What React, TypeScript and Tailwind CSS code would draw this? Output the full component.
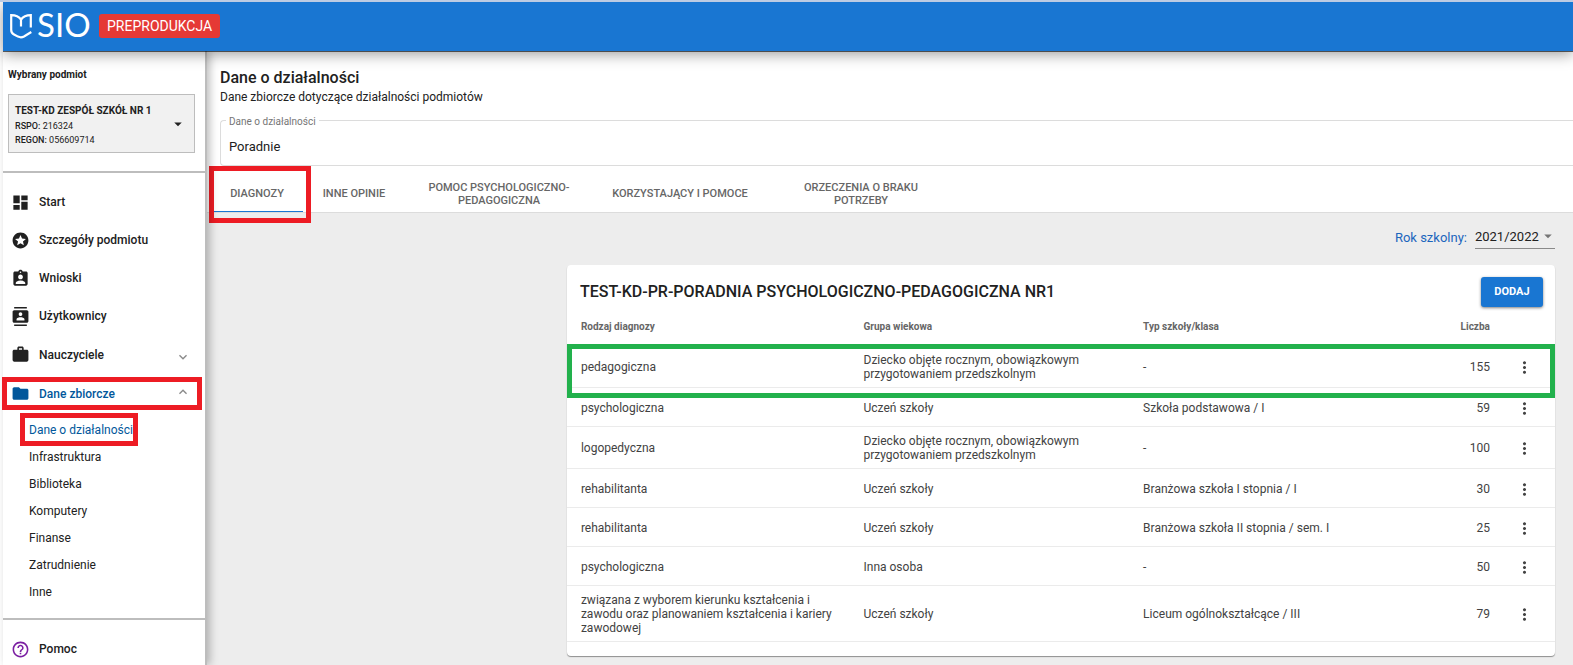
import React from "react";
import type { IconType } from "react-icons";
import {
  MdArrowDropDown,
  MdAssignmentInd,
  MdContacts,
  MdDashboard,
  MdFolder,
  MdHelpOutline,
  MdKeyboardArrowDown,
  MdKeyboardArrowUp,
  MdMoreVert,
  MdStars,
  MdWork,
} from "react-icons/md";

type NavItem = { label: string; icon: IconType };

const navItems: NavItem[] = [
  { label: "Start", icon: MdDashboard },
  { label: "Szczegóły podmiotu", icon: MdStars },
  { label: "Wnioski", icon: MdAssignmentInd },
  { label: "Użytkownicy", icon: MdContacts },
];

const subItems = ["Infrastruktura", "Biblioteka", "Komputery", "Finanse", "Zatrudnienie", "Inne"];

type Row = { kind: string; group: string; school: string; count: number };

const rows: Row[] = [
  { kind: "pedagogiczna", group: "Dziecko objęte rocznym, obowiązkowym przygotowaniem przedszkolnym", school: "-", count: 155 },
  { kind: "psychologiczna", group: "Uczeń szkoły", school: "Szkoła podstawowa / I", count: 59 },
  { kind: "logopedyczna", group: "Dziecko objęte rocznym, obowiązkowym przygotowaniem przedszkolnym", school: "-", count: 100 },
  { kind: "rehabilitanta", group: "Uczeń szkoły", school: "Branżowa szkoła I stopnia / I", count: 30 },
  { kind: "rehabilitanta", group: "Uczeń szkoły", school: "Branżowa szkoła II stopnia / sem. I", count: 25 },
  { kind: "psychologiczna", group: "Inna osoba", school: "-", count: 50 },
  { kind: "związana z wyborem kierunku kształcenia i zawodu oraz planowaniem kształcenia i kariery zawodowej", group: "Uczeń szkoły", school: "Liceum ogólnokształcące / III", count: 79 },
];

function Logo() {
  return (
    <div className="flex w-[82px] items-center gap-1 text-white">
      <svg viewBox="0 0 24 26" className="h-[26px] w-6 shrink-0" fill="none" stroke="currentColor" strokeWidth="2.2" aria-hidden="true">
        <path d="M12 13.500 V6.500 Q9 2.200 2.200 2.200 V17 Q2.200 20 5 21.500 L9 23.600 Q12 25 15 23.500 L22.300 19" />
        <path d="M12 6.500 Q15 2.200 21.800 2.200 V14.500" />
      </svg>
      <span className="pb-[3px] font-[Lato,sans-serif] text-[33px] leading-9">SIO</span>
    </div>
  );
}

function Header() {
  return (
    <header className="relative z-20 ml-[3px] flex h-[49px] items-center bg-[#1976d2] pb-[2px] pl-[6px] shadow-[0_1px_0_rgba(0,0,0,0.6),0_3px_14px_rgba(0,0,0,0.4)]">
      <Logo />
      <span className="ml-2 rounded-[3px] bg-[#e53935] px-2 text-sm leading-6 text-white">PREPRODUKCJA</span>
    </header>
  );
}

function Sidebar() {
  return (
    <aside className="relative z-10 ml-[3px] w-[204px] shrink-0 border-r-2 border-[#bdbdbd] bg-white shadow-[3px_0_8px_rgba(0,0,0,0.25)]">
      <div className="h-[120px] px-[5px] pt-4">
        <p className="text-[10px] leading-4 font-bold">Wybrany podmiot</p>
        <button type="button" className="mt-[11px] flex h-[59px] w-[187px] items-center justify-between border border-[#bdbdbd] bg-[#f1f1f1] pr-[7px] pl-[6px] text-left">
          <span className="pt-[2px] text-[9px] leading-[14px]">
            <span className="block text-[10px] leading-4 font-bold">TEST-KD ZESPÓŁ SZKÓŁ NR 1</span>
            <span className="block"><b className="font-medium">RSPO:</b> 216324</span>
            <span className="block"><b className="font-medium">REGON:</b> 056609714</span>
          </span>
          <MdArrowDropDown size={18} />
        </button>
      </div>
      <nav className="border-y-2 border-[#bdbdbd] pt-[10px] pb-[13px]">
        {navItems.map(({ label, icon: Icon }) => (
          <a key={label} href="#" className="flex h-[38px] items-center gap-[9px] pl-2 text-[12px] font-medium">
            <Icon size={19} />
            {label}
          </a>
        ))}
        <a href="#" className="flex h-[39px] items-center gap-[9px] pr-[14px] pl-2 text-[12px] font-medium">
          <MdWork size={19} />
          <span className="grow">Nauczyciele</span>
          <MdKeyboardArrowDown size={16} className="mt-1 text-[#8a8a8a]" />
        </a>
        <a href="#" className="relative flex h-[39px] items-center gap-[9px] pr-[14px] pl-2 text-[12px] font-medium text-[#01579b]">
          <MdFolder size={19} />
          <span className="grow">Dane zbiorcze</span>
          <MdKeyboardArrowUp size={16} className="mb-1 text-[#8a8a8a]" />
          <span className="absolute inset-y-[3px] -left-px w-[200px] border-[5px] border-[#ed1c24]" />
        </a>
        <a href="#" className="relative mt-[3px] flex h-[27px] items-center pl-[26px] text-[12px] text-[#01579b]">
          Dane o działalności
          <span className="absolute -inset-y-[3px] left-[17px] w-[118px] border-[5px] border-[#ed1c24]" />
        </a>
        {subItems.map((label) => (
          <a key={label} href="#" className="flex h-[27px] items-center pl-[26px] text-[12px]">
            {label}
          </a>
        ))}
      </nav>
      <a href="#" className="mt-[10px] flex h-[34px] items-center gap-[9px] pt-1 pl-2 text-[12px] font-medium">
        <MdHelpOutline size={19} className="text-[#7b1fa2]" />
        Pomoc
      </a>
    </aside>
  );
}

function Tabs() {
  const tab = "flex items-center justify-center px-4 pt-[2px] text-center text-[11px] leading-[13px] font-medium text-[#666]";
  return (
    <div role="tablist" className="flex h-[47px] border-b border-[#dcdcdc] pt-[7px] pl-1">
      <button type="button" role="tab" aria-selected="true" className={`${tab} relative w-[92px] border-b border-[#1976d2]`}>
        DIAGNOZY
        <span className="absolute -top-[7px] -bottom-[12px] -left-[2px] w-[102px] border-[5px] border-[#ed1c24]" />
      </button>
      <button type="button" role="tab" className={`${tab} w-[102px]`}>INNE OPINIE</button>
      <button type="button" role="tab" className={`${tab} w-[188px]`}>POMOC PSYCHOLOGICZNO-PEDAGOGICZNA</button>
      <button type="button" role="tab" className={`${tab} w-[174px]`}>KORZYSTAJĄCY I POMOCE</button>
      <button type="button" role="tab" className={`${tab} w-[188px]`}>ORZECZENIA O BRAKU POTRZEBY</button>
    </div>
  );
}

function DataCard() {
  return (
    <section className="ml-auto w-[73.3%] rounded-[4px] bg-white pb-[14px] shadow-[0_1px_1px_rgba(0,0,0,0.4)]">
      <div className="flex items-start justify-between pt-3 pr-3 pl-[13px]">
        <h2 className="text-base leading-[30px] font-medium">TEST-KD-PR-PORADNIA PSYCHOLOGICZNO-PEDAGOGICZNA NR1</h2>
        <button type="button" className="h-[30px] w-[62px] rounded-[3px] bg-[#1976d2] text-[11px] font-bold text-white shadow-[0_1px_3px_rgba(0,0,0,0.5)]">
          DODAJ
        </button>
      </div>
      <table className="w-full table-fixed border-collapse text-left text-[12px] leading-[14px] text-[#424242]">
        <thead>
          <tr className="h-[39px] text-[10px] text-[#666]">
            <th className="w-[28.4%] pr-3 pl-[14px] font-bold">Rodzaj diagnozy</th>
            <th className="w-[28.3%] pr-3 pl-4 font-bold">Grupa wiekowa</th>
            <th className="px-4 font-bold">Typ szkoły/klasa</th>
            <th className="w-[90px] pr-1 text-right font-bold">Liczba</th>
            <th className="w-[61px]" aria-label="Akcje" />
          </tr>
        </thead>
        <tbody>
          {rows.map((row, i) => (
            <tr key={i} className="relative h-[39px] border-b border-[#ebebeb]">
              <td className="pt-[7px] pr-3 pb-[6px] pl-[14px]">
                {row.kind}
                {i === 0 && <span className="absolute inset-x-0 -top-[2px] -bottom-[11px] border-[5px] border-[#22b14c]" />}
              </td>
              <td className="pt-[7px] pr-3 pb-[6px] pl-4">{row.group}</td>
              <td className="px-4 pt-[7px] pb-[6px]">{row.school}</td>
              <td className="pt-[7px] pr-1 pb-[6px] text-right">{row.count}</td>
              <td>
                <button type="button" aria-label="Więcej" className="mx-auto block pt-[2px]">
                  <MdMoreVert size={19} />
                </button>
              </td>
            </tr>
          ))}
        </tbody>
      </table>
    </section>
  );
}

export default function App() {
  return (
    <div className="flex min-h-screen flex-col overflow-hidden border-t-2 border-[#bccbe3] bg-white font-[Roboto,sans-serif] text-[#212121]">
      <Header />
      <div className="flex grow">
        <Sidebar />
        <main className="flex min-w-0 grow flex-col bg-[#ededed]">
          <div className="bg-white">
            <div className="pt-[17px] pl-[13px]">
              <h1 className="text-base leading-5 font-medium">Dane o działalności</h1>
              <p className="text-[12px] leading-[18px]">Dane zbiorcze dotyczące działalności podmiotów</p>
              <fieldset className="mt-2 h-[52px] rounded-l-[4px] border border-r-0 border-[#dcdcdc] pl-[5px]">
                <legend className="px-[3px] pt-1 text-[10px] leading-[8px] text-[#757575]">
                  <label htmlFor="area">Dane o działalności</label>
                </legend>
                <select id="area" className="block w-full appearance-none pt-[11px] pl-[3px] text-[13px] leading-5 outline-none">
                  <option>Poradnie</option>
                </select>
              </fieldset>
            </div>
            <Tabs />
          </div>
          <div className="pr-[18px] pb-2">
            <div className="flex h-[52px] items-start justify-end gap-2 pt-[13px] text-[13px]">
              <label htmlFor="year" className="pt-[2px] leading-5 text-[#1c66bd]">Rok szkolny:</label>
              <div className="relative w-20 border-b border-[#8a8a8a]">
                <select id="year" className="block w-full appearance-none leading-[22px] outline-none">
                  <option>2021/2022</option>
                </select>
                <MdArrowDropDown size={18} className="pointer-events-none absolute top-px -right-[2px] text-[#757575]" />
              </div>
            </div>
            <DataCard />
          </div>
        </main>
      </div>
    </div>
  );
}
